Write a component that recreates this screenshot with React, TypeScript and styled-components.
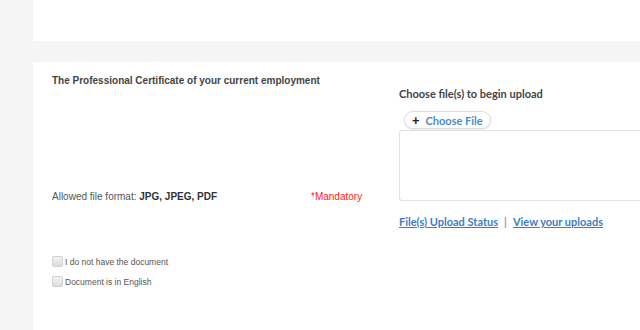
import React from 'react'
import styled, {createGlobalStyle} from 'styled-components'

const GlobalStyle = createGlobalStyle`
  html, body {
    margin: 0;
    padding: 0;
    background: #f5f5f5;
  }
  body {
    font-family: "Liberation Sans", Arial, sans-serif;
  }
`

export default function App(): JSX.Element {
  return (
    <Page>
      <GlobalStyle />
      <Sidebar />
      <Main>
        <TopCard />
        <FormCard>
          <LeftColumn>
            <Title>The Professional Certificate of your current employment</Title>
            <FormatRow>
              <Format>
                Allowed file format: <strong>JPG, JPEG, PDF</strong>
              </Format>
              <Mandatory>*Mandatory</Mandatory>
            </FormatRow>
            <Checks>
              <CheckRow>
                <Box />
                I do not have the document
              </CheckRow>
              <CheckRow>
                <Box />
                Document is in English
              </CheckRow>
            </Checks>
          </LeftColumn>

          <RightColumn>
            <UploadLabel>Choose file(s) to begin upload</UploadLabel>
            <ChooseButton>
              <Plus>+</Plus>
              Choose File
            </ChooseButton>
            <DropZone />
            <Links>
              <LinkText>File(s) Upload Status</LinkText>
              <Divider>|</Divider>
              <LinkText>View your uploads</LinkText>
            </Links>
          </RightColumn>
        </FormCard>
      </Main>
    </Page>
  )
}

const Page = styled.div`
  display: flex;
  width: 640px;
  height: 330px;
  overflow: hidden;
`

const Sidebar = styled.div`
  width: 33px;
  flex-shrink: 0;
  background: #f5f5f5;
`

const Main = styled.div`
  flex: 1;
  display: flex;
  flex-direction: column;
  gap: 21px;
`

const TopCard = styled.div`
  height: 41px;
  background: #fff;
`

const FormCard = styled.div`
  flex: 1;
  background: #fff;
  display: grid;
  grid-template-columns: 347px 1fr;
  padding-left: 19px;
`

const LeftColumn = styled.div`
  display: flex;
  flex-direction: column;
  padding-top: 12px;
`

const Title = styled.div`
  font-size: 10px;
  font-weight: bold;
  color: #444;
  line-height: 14px;
`

const FormatRow = styled.div`
  display: flex;
  margin-top: 102px;
  font-size: 10px;
  line-height: 14px;
`

const Format = styled.div`
  width: 259px;
  color: #555;

  strong {
    color: #333;
  }
`

const Mandatory = styled.div`
  color: #f22;
`

const Checks = styled.div`
  display: flex;
  flex-direction: column;
  gap: 7px;
  margin-top: 52px;
`

const CheckRow = styled.label`
  display: flex;
  align-items: center;
  gap: 2px;
  font-size: 8.5px;
  line-height: 13px;
  color: #555;
`

const Box = styled.span`
  width: 9px;
  height: 9px;
  margin-top: -3px;
  border: 1px solid #d0d0d0;
  border-radius: 2px;
  background: linear-gradient(#f4f4f4, #dcdcdc);
`

const RightColumn = styled.div`
  display: flex;
  flex-direction: column;
  align-items: flex-start;
  padding-top: 25px;
  font-family: Lato, "Open Sans", sans-serif;
`

const UploadLabel = styled.div`
  font-size: 11px;
  font-weight: bold;
  color: #444;
  line-height: 14px;
`

const ChooseButton = styled.div`
  display: flex;
  align-items: center;
  gap: 6px;
  height: 16px;
  margin-top: 10px;
  margin-left: 5px;
  padding: 0 7px 0 7px;
  border: 1px solid #ddd;
  border-radius: 9px;
  box-shadow: 0 1px 2px rgba(0, 0, 0, 0.1);
  background: #fff;
  font-size: 11px;
  font-weight: bold;
  color: #4a8ccb;
`

const Plus = styled.span`
  color: #222;
  font-size: 13px;
  font-weight: 900;
`

const DropZone = styled.div`
  align-self: stretch;
  height: 69px;
  margin-top: 1px;
  border: 1px solid #e2e2e2;
  border-right: none;
  border-radius: 3px 0 0 3px;
`

const Links = styled.div`
  display: flex;
  align-items: center;
  gap: 6px;
  margin-top: 14px;
  font-size: 11px;
  font-weight: bold;
  line-height: 14px;
`

const LinkText = styled.span`
  color: #3d7cc4;
  text-decoration: underline;
`

const Divider = styled.span`
  color: #999;
`
